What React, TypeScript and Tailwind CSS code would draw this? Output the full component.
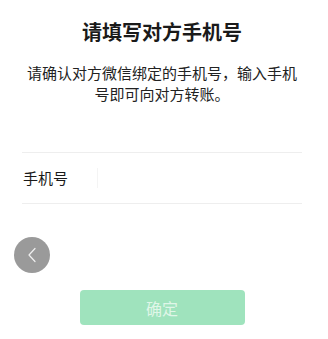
import React from "react";

export default function App() {
  return (
    <div
      className="relative w-[328px] h-[339px] bg-white overflow-hidden"
      style={{ fontFamily: '"Noto Sans CJK SC", "Noto Sans", sans-serif' }}
    >
      <div className="ml-[22px] w-[280px] flex flex-col items-center pt-[18px]">
        <h1 className="text-[20px] leading-[28px] font-semibold text-[#1a1a1a]">请填写对方手机号</h1>
        <p className="mt-[16px] text-[15px] leading-[21px] text-[#222] text-center">
          请确认对方微信绑定的手机号，输入手机号即可向对方转账。
        </p>
        <div className="mt-[48px] w-full border-t border-b border-[#eeeeee] h-[52px] flex items-center pl-[1px]">
          <span className="w-[74px] text-[15px] text-[#1a1a1a] leading-[22px]">手机号</span>
          <div className="h-[20px] w-px bg-[#f4f4f4]" />
        </div>
        <button className="mt-[86px] w-[165px] h-[35px] rounded-[4px] bg-[#9fe3bd] text-[#dff6e8] text-[16px] flex items-center justify-center">
          确定
        </button>
      </div>
      <div className="absolute left-[14px] top-[237px] w-[36px] h-[36px] rounded-full bg-[#9a9a9a] flex items-center justify-center">
        <svg width="10" height="16" viewBox="0 0 10 16" fill="none">
          <path d="M8 1.5 L2 8 L8 14.5" stroke="#f0f0f0" strokeWidth="1.2" strokeLinecap="round" strokeLinejoin="round" />
        </svg>
      </div>
    </div>
  );
}
